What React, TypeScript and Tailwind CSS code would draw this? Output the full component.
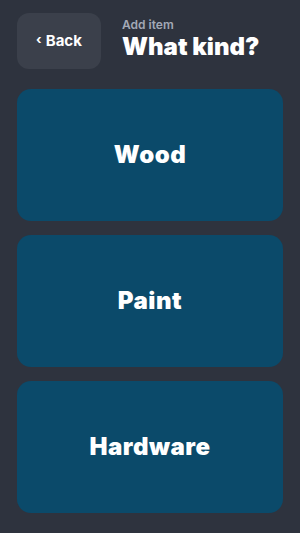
const kinds = ['Wood', 'Paint', 'Hardware']

export default function App() {
  return (
    <div className="h-screen flex flex-col bg-[#2e333e] px-[17px] pt-[13px] pb-5 font-['Inter',sans-serif] text-white">
      <div className="flex items-center gap-[21px] shrink-0">
        <button className="w-[84px] h-14 rounded-xl bg-[#3b404b] flex items-center justify-center gap-1 text-[15px] font-bold">
          <span className="text-[13px] -mt-0.5">‹</span>
          <span>Back</span>
        </button>
        <div className="flex flex-col -mt-1">
          <span className="text-xs font-semibold leading-4 text-[#a3a9b6]">Add item</span>
          <h1 className="text-2xl font-black leading-7">What kind?</h1>
        </div>
      </div>

      <div className="flex-1 flex flex-col gap-[14px] mt-5">
        {kinds.map((k) => (
          <button
            key={k}
            className="flex-1 rounded-[14px] bg-[#0b4a6a] flex items-center justify-center text-2xl font-black tracking-[0.5px]"
          >
            {k}
          </button>
        ))}
      </div>
    </div>
  )
}
